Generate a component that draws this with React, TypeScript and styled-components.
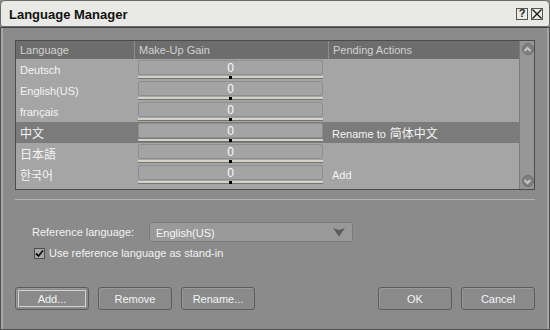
import React, { FC } from "react";
import styled, { createGlobalStyle } from "styled-components";

const GlobalStyle = createGlobalStyle`
  html, body {
    margin: 0;
    padding: 0;
    background: #8b8b8b;
  }
  * {
    box-sizing: border-box;
  }
`;

interface ILanguageRow {
  name: string;
  gain: number;
  pending?: string;
  pendingCjk?: string;
  cjk?: boolean;
  selected?: boolean;
}

const rows: ILanguageRow[] = [
  { name: "Deutsch", gain: 0 },
  { name: "English(US)", gain: 0 },
  { name: "français", gain: 0 },
  { name: "中文", gain: 0, cjk: true, selected: true, pending: "Rename to", pendingCjk: "简体中文" },
  { name: "日本語", gain: 0, cjk: true },
  { name: "한국어", gain: 0, cjk: true, pending: "Add" },
];

const GainCell: FC<{ value: number }> = ({ value }) => (
  <GainWrap>
    <GainBox>{value}</GainBox>
    <GainTrack>
      <GainTick />
    </GainTrack>
  </GainWrap>
);

export default function App() {
  return (
    <>
      <GlobalStyle />
      <Window>
        <TitleBar>
          <Title>Language Manager</Title>
          <TitleButtons>
            <TitleButton>?</TitleButton>
            <TitleButton>
              <svg width="10" height="10" viewBox="0 0 10 10">
                <path d="M0.5 0.5 L9.5 9.5 M9.5 0.5 L0.5 9.5" stroke="#1a1a1a" strokeWidth="1.4" />
              </svg>
            </TitleButton>
          </TitleButtons>
        </TitleBar>
        <Body>
          <Table>
            <Grid>
              <HeaderCell>Language</HeaderCell>
              <HeaderCell $divider>Make-Up Gain</HeaderCell>
              <HeaderCell $divider>Pending Actions</HeaderCell>
              {rows.map((r) => (
                <React.Fragment key={r.name}>
                  <NameCell $selected={r.selected} $cjk={r.cjk}>
                    {r.name}
                  </NameCell>
                  <Cell $selected={r.selected}>
                    <GainCell value={r.gain} />
                  </Cell>
                  <NameCell $selected={r.selected}>
                    <span>
                      {r.pending}
                      {r.pendingCjk && <Cjk>{r.pendingCjk}</Cjk>}
                    </span>
                  </NameCell>
                </React.Fragment>
              ))}
            </Grid>
            <ScrollBar>
              <ScrollButton>
                <svg width="9" height="9" viewBox="0 0 9 9">
                  <path d="M1.5 6 L4.5 3 L7.5 6" stroke="#c6c6c6" strokeWidth="2" fill="none" />
                </svg>
              </ScrollButton>
              <ScrollButton>
                <svg width="9" height="9" viewBox="0 0 9 9">
                  <path d="M1.5 3 L4.5 6 L7.5 3" stroke="#c6c6c6" strokeWidth="2" fill="none" />
                </svg>
              </ScrollButton>
            </ScrollBar>
          </Table>
          <Separator />
          <FormRow>
            <Label>Reference language:</Label>
            <Select>
              English(US)
              <svg width="12" height="9" viewBox="0 0 12 9">
                <path d="M0 0 L6 8.5 L12 0 L6 2 Z" fill="#5c5c5c" />
              </svg>
            </Select>
          </FormRow>
          <CheckRow>
            <CheckBox>
              <svg width="9" height="9" viewBox="0 0 9 9">
                <path d="M1 4.5 L3.5 7 L8 1.5" stroke="#111" strokeWidth="1.8" fill="none" />
              </svg>
            </CheckBox>
            Use reference language as stand-in
          </CheckRow>
          <ButtonRow>
            <Button $focused>Add...</Button>
            <Button>Remove</Button>
            <Button>Rename...</Button>
            <Spacer />
            <Button>OK</Button>
            <Button>Cancel</Button>
          </ButtonRow>
        </Body>
      </Window>
    </>
  );
}

const Window = styled.div`
  width: 550px;
  height: 330px;
  display: flex;
  flex-direction: column;
  background: #8b8b8b;
  font-family: "Liberation Sans", "Noto Sans CJK SC", sans-serif;
  font-size: 11px;
  color: #f2f2f2;
`;

const TitleBar = styled.div`
  height: 27px;
  display: flex;
  align-items: center;
  padding: 0 6px 0 8px;
  background: #e9e9e5;
  border: 1px solid #6a6a6a;
  border-radius: 5px 5px 3px 3px;
`;

const Title = styled.div`
  font-size: 13px;
  font-weight: bold;
  color: #111;
  padding-top: 1px;
`;

const TitleButtons = styled.div`
  margin-left: auto;
  display: flex;
  gap: 3px;
`;

const TitleButton = styled.div`
  width: 12px;
  height: 12px;
  border: 1px solid #555;
  background: #ebebe7;
  display: flex;
  align-items: center;
  justify-content: center;
  color: #1a1a1a;
  font-weight: bold;
  font-size: 11px;
  line-height: 1;
`;

const Body = styled.div`
  flex: 1;
  display: flex;
  flex-direction: column;
  padding: 12px 14px 19px 14px;
  border: 1px solid #505050;
  border-top: 1px solid #444;
  box-shadow: inset 2px 0 0 #a6a6a6, inset -2px 0 0 #a6a6a6;
`;

const Table = styled.div`
  height: 150px;
  display: grid;
  grid-template-columns: 1fr 15px;
  border: 1px solid #4b4b4b;
  background: #a5a5a5;
`;

const Grid = styled.div`
  display: grid;
  grid-template-columns: 118px 194px 1fr;
  grid-auto-rows: 21px;
  grid-template-rows: 18px;
  align-content: start;
`;

const HeaderCell = styled.div<{ $divider?: boolean }>`
  background: #6d6d6d;
  color: #d2d2d2;
  display: flex;
  align-items: center;
  padding-left: 4px;
  border-left: ${({ $divider }) => ($divider ? "1px solid #8c8c8c" : "none")};
`;

const Cell = styled.div<{ $selected?: boolean }>`
  background: ${({ $selected }) => ($selected ? "#7b7b7b" : "transparent")};
  padding: 1px 5px 1px 4px;
`;

const NameCell = styled.div<{ $selected?: boolean; $cjk?: boolean }>`
  background: ${({ $selected }) => ($selected ? "#7b7b7b" : "transparent")};
  color: #f4f4f4;
  display: flex;
  align-items: center;
  padding-left: 4px;
  font-size: ${({ $cjk }) => ($cjk ? "12px" : "11px")};
  white-space: nowrap;
`;

const Cjk = styled.span`
  font-size: 12px;
  margin-left: 4px;
`;

const GainWrap = styled.div`
  display: flex;
  flex-direction: column;
  gap: 1px;
`;

const GainBox = styled.div`
  height: 15px;
  border: 1px solid #8e8e8e;
  border-radius: 2px;
  background: #a4a4a4;
  color: #fafafa;
  font-size: 12px;
  display: flex;
  align-items: center;
  justify-content: center;
`;

const GainTrack = styled.div`
  position: relative;
  height: 3px;
  background: #d6d3c5;
  border-bottom: 1px solid #737373;
`;

const GainTick = styled.div`
  position: absolute;
  left: 91px;
  top: 0;
  width: 3px;
  height: 3px;
  background: #000;
`;

const ScrollBar = styled.div`
  display: flex;
  flex-direction: column;
  justify-content: space-between;
  align-items: center;
  padding: 2px 0 2px 1px;
  background: #969696;
  border-left: 1px solid #7c7c7c;
`;

const ScrollButton = styled.div`
  width: 12px;
  height: 12px;
  border-radius: 50%;
  background: #7f7f7f;
  border: 1px solid #707070;
  display: flex;
  align-items: center;
  justify-content: center;
`;

const Separator = styled.div`
  height: 1px;
  margin-top: 9px;
  background: #b3b3b3;
`;

const FormRow = styled.div`
  display: flex;
  align-items: center;
  margin-top: 22px;
  padding-left: 17px;
`;

const Label = styled.div`
  width: 117px;
  color: #f2f2f2;
`;

const Select = styled.div`
  width: 204px;
  height: 20px;
  display: flex;
  align-items: center;
  justify-content: space-between;
  padding: 1px 7px 0 6px;
  background: #999;
  border: 1px solid #7b7b7b;
  border-radius: 3px;
  color: #f6f6f6;
`;

const CheckRow = styled.div`
  display: flex;
  align-items: center;
  gap: 4px;
  margin-top: 5px;
  padding-left: 19px;
`;

const CheckBox = styled.div`
  width: 11px;
  height: 11px;
  border: 1px solid #4e4e4e;
  background: #a9a9a9;
  display: flex;
  align-items: center;
  justify-content: center;
`;

const ButtonRow = styled.div`
  margin-top: auto;
  display: flex;
  gap: 9px;
`;

const Spacer = styled.div`
  flex: 1;
`;

const Button = styled.div<{ $focused?: boolean }>`
  width: 74px;
  height: 23px;
  display: flex;
  align-items: center;
  justify-content: center;
  background: #8a8a8a;
  border: 1px solid #5c5c5c;
  border-radius: 3px;
  box-shadow: inset 1px 1px 0 #999;
  color: #f4f4f4;
  outline: ${({ $focused }) => ($focused ? "1px solid #d2d2d2" : "none")};
  outline-offset: -4px;
`;
